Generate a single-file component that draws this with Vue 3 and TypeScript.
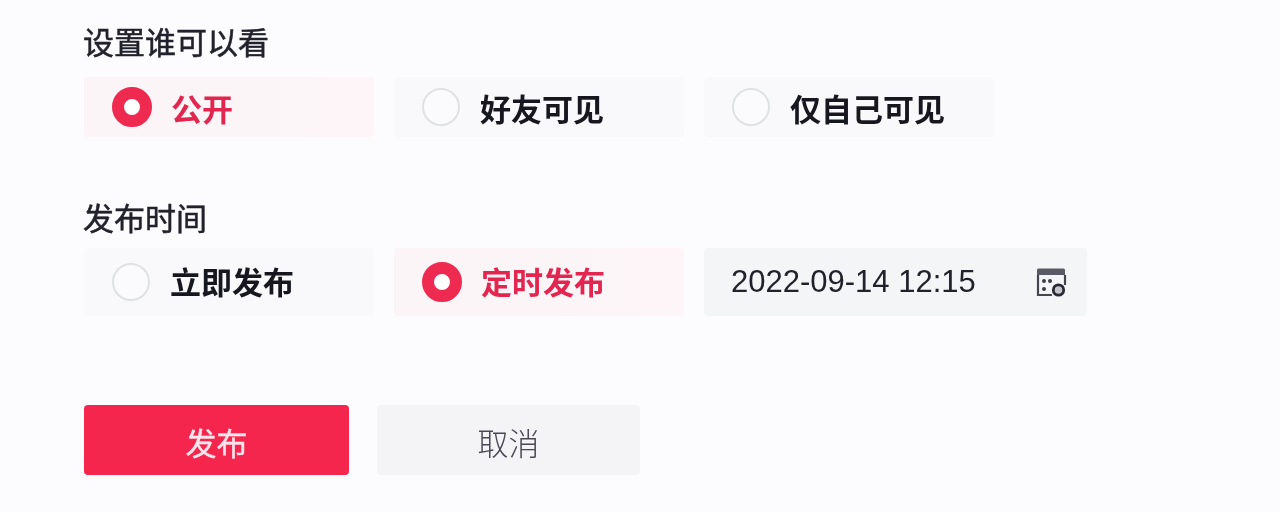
<script setup lang="ts">
interface Opt { label: string; on: boolean }
const vis: Opt[] = [
  { label: '公开', on: true },
  { label: '好友可见', on: false },
  { label: '仅自己可见', on: false },
]
const time: Opt[] = [
  { label: '立即发布', on: false },
  { label: '定时发布', on: true },
]
</script>

<template>
  <main class="page">
    <section class="vis">
      <h2 class="title">设置谁可以看</h2>
      <div class="row">
        <div v-for="o in vis" :key="o.label" class="opt" :class="{ on: o.on }">
          <span class="radio"></span>
          <span class="label">{{ o.label }}</span>
        </div>
      </div>
    </section>
    <section class="time">
      <h2 class="title">发布时间</h2>
      <div class="row">
        <div v-for="o in time" :key="o.label" class="opt tall" :class="{ on: o.on }">
          <span class="radio"></span>
          <span class="label">{{ o.label }}</span>
        </div>
        <div class="date">
          <span class="datetext">2022-09-14 12:15</span>
          <svg class="cal" width="31" height="30" viewBox="0 0 31 30" fill="none">
            <path d="M1 7V2A1.500 1.500 0 0 1 2.500 .5h25A1.500 1.500 0 0 1 29 2V7Z" fill="#5a5a64" />
            <path d="M2 7v20h14M29 7v10" stroke="#45454f" stroke-width="2.200" />
            <circle cx="8" cy="13" r="2" fill="#3c3c46" />
            <circle cx="14" cy="13" r="2" fill="#3c3c46" />
            <circle cx="8" cy="21" r="2" fill="#3c3c46" />
            <circle cx="22.500" cy="22" r="5.200" fill="#c4c4ca" stroke="#2a2a34" stroke-width="2.800" />
          </svg>
        </div>
      </div>
    </section>
    <div class="actions">
      <button class="btn primary"><span class="btntext">发布</span></button>
      <button class="btn ghost"><span class="btntext">取消</span></button>
    </div>
  </main>
</template>

<style>
html, body { margin: 0; background: #fcfcfe; }
</style>

<style scoped>
.page {
  width: 1280px;
  height: 512px;
  box-sizing: border-box;
  padding: 21px 0 0 83px;
  background: #fcfcfe;
  font-family: "Noto Sans CJK SC", "Liberation Sans", sans-serif;
  overflow: hidden;
  filter: blur(0.5px);
}
.title {
  margin: 0;
  font-size: 31px;
  line-height: 40px;
  font-weight: 400;
  color: #22222c;
  -webkit-text-stroke: 0.5px #22222c;
}
.vis .title { margin-bottom: 16px; }
.time { margin-top: 60px; }
.time .title { margin-bottom: 11px; }
.row { display: flex; gap: 20px; margin-left: 1px; }
.opt {
  width: 290px;
  height: 60px;
  box-sizing: border-box;
  padding-left: 28px;
  display: flex;
  align-items: center;
  gap: 20px;
  background: #f9f9fb;
  border-radius: 4px;
}
.opt.tall { height: 68px; }
.opt.on { background: linear-gradient(90deg, #fbf5f8, #fdf5f7); }
.radio {
  width: 38px;
  height: 38px;
  box-sizing: border-box;
  border: 2px solid #dfe2e4;
  border-radius: 50%;
  background: #fbfbfd;
  flex: none;
}
.on .radio {
  width: 40px;
  height: 40px;
  border: 12px solid #ee2a50;
  background: #fff;
}
.label {
  font-size: 31px;
  line-height: 40px;
  font-weight: 700;
  color: #17171f;
  position: relative;
  top: -1px;
}
.vis .label { top: 1px; }
.on .label { color: #e3264f; margin-left: -1px; }
.date {
  width: 383px;
  height: 68px;
  box-sizing: border-box;
  padding: 0 20px 0 27px;
  display: flex;
  align-items: center;
  justify-content: space-between;
  background: #f4f5f7;
  border-radius: 4px;
}
.datetext {
  font-family: "Liberation Sans", sans-serif;
  font-size: 31px;
  color: #22222c;
}
.cal { flex: none; margin-top: 1px; }
.actions { display: flex; gap: 28px; margin-top: 89px; margin-left: 1px; }
.btn {
  height: 70px;
  border: none;
  border-radius: 4px;
  font-family: inherit;
  font-size: 31px;
  padding: 0;
}
.btntext { position: relative; top: 1px; }
.primary {
  width: 265px;
  background: #f5264d;
  color: #ffe6ec;
  font-weight: 400;
  -webkit-text-stroke: 0.4px #ffe6ec;
}
.ghost {
  width: 263px;
  background: #f4f4f6;
  color: #4a4656;
  font-weight: 300;
}
</style>
